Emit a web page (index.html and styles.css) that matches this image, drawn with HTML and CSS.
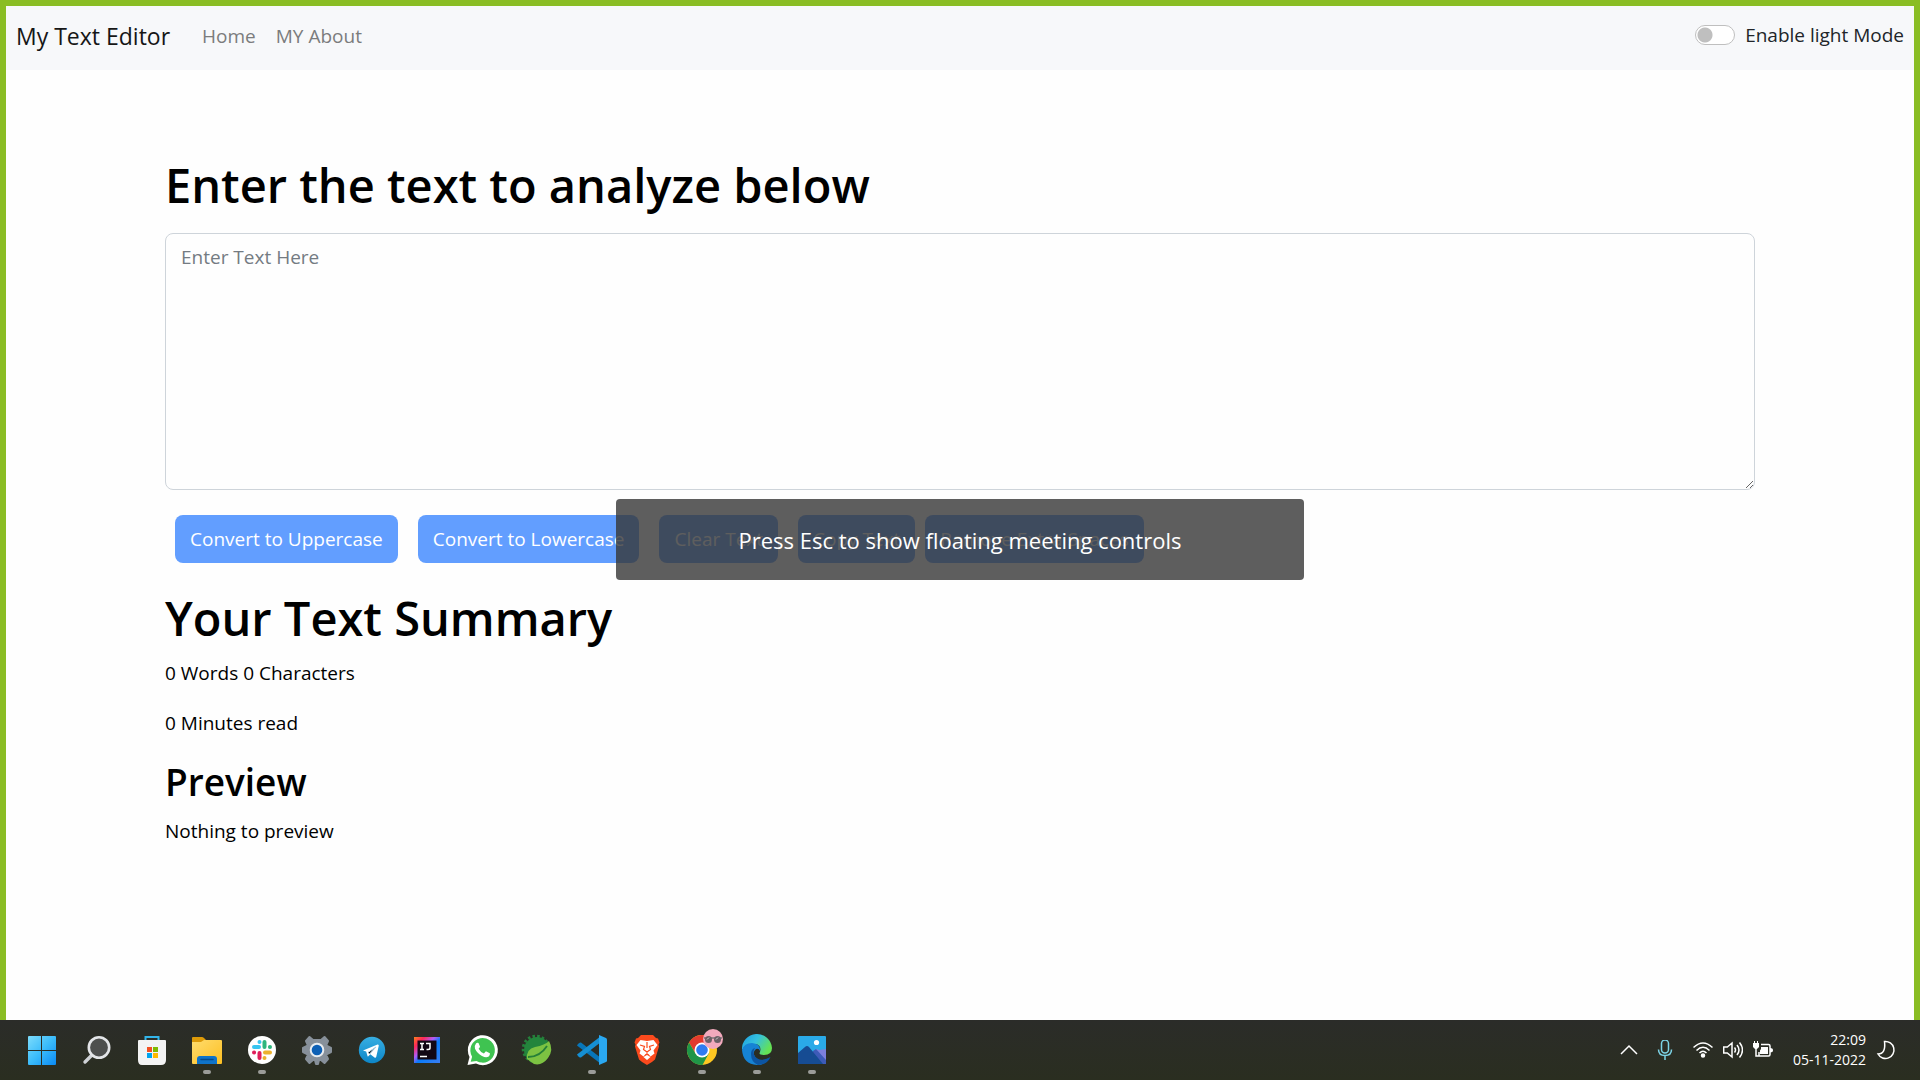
FILE: index.html
```html
<!DOCTYPE html>
<html lang="en">
<head>
<meta charset="utf-8">
<title>My Text Editor</title>
<link rel="stylesheet" href="styles.css">
</head>
<body>
<div class="screen">
  <nav class="navbar">
    <a class="brand" href="#">My Text Editor</a>
    <a class="nav-link" href="#">Home</a>
    <a class="nav-link" href="#">MY About</a>
    <div class="mode">
      <input class="switch" type="checkbox" role="switch" id="mode">
      <label for="mode">Enable light Mode</label>
    </div>
  </nav>

  <main class="container">
    <h1><label for="text">Enter the text to analyze below</label></h1>
    <textarea id="text" rows="8" placeholder="Enter Text Here"></textarea>
    <div class="actions">
      <button class="btn" type="button" disabled>Convert to Uppercase</button>
      <button class="btn" type="button" disabled>Convert to Lowercase</button>
      <button class="btn" type="button" disabled>Clear Text</button>
      <button class="btn btn-joined" type="button" disabled>Copy Text</button>
      <button class="btn" type="button" disabled>Remove Extra Spaces</button>
    </div>
    <h1>Your Text Summary</h1>
    <p>0 Words 0 Characters</p>
    <p>0 Minutes read</p>
    <h2>Preview</h2>
    <p>Nothing to preview</p>
  </main>
  <div class="toast" role="status">Press Esc to show floating meeting controls</div>
</div>

<footer class="taskbar">
  <div class="apps">
    <button class="app" type="button" aria-label="Start">
      <svg viewBox="0 0 30 30"><defs><linearGradient id="win" x1="0" y1="0" x2="1" y2="1" ><stop offset="0" stop-color="#7ddcfb"/><stop offset=".5" stop-color="#3bbcfb"/><stop offset="1" stop-color="#0a8af5"/></linearGradient></defs><path fill="url(#win)" d="M1 2q0-1 1-1h12v14H1zM15 1h13q1 0 1 1v13H15zM1 16h13v14H2q-1 0-1-1zM15 16h14v13q0 1-1 1H15z"/></svg>
    </button>
    <button class="app" type="button" aria-label="Search">
      <svg viewBox="0 0 30 30"><path d="M10 20L3 27" stroke="#cfd2d6" stroke-width="3.4" stroke-linecap="round"/><circle cx="17" cy="12.500" r="10.200" fill="#4d4f4e" stroke="#e3e5e8" stroke-width="2.600"/></svg>
    </button>
    <button class="app" type="button" aria-label="Store">
      <svg viewBox="0 0 30 30"><path d="M8.500 6V2h13v4" fill="none" stroke="#32b5ea" stroke-width="2"/><path fill="#f3f3f3" d="M2 5h26q1 0 1 1v19q0 5-5 5H5q-4 0-4-5V6q0-1 1-1z"/><path fill="#f25022" d="M10 12h5v5h-5z"/><path fill="#7fba00" d="M16 12h5v5h-5z"/><path fill="#00a4ef" d="M10 18h5v5h-5z"/><path fill="#ffb900" d="M16 18h5v5h-5z"/></svg>
    </button>
    <button class="app running" type="button" aria-label="File Explorer">
      <svg viewBox="0 0 30 30"><defs><linearGradient id="fold" x1="0" y1="0" x2="1" y2="1"><stop stop-color="#ffdc6d"/><stop offset="1" stop-color="#fdbf22"/></linearGradient></defs><path fill="#dd9a08" d="M0 3q0-1 1-1h9q1 0 2 1l2 2v5H0z"/><path fill="url(#fold)" d="M0 7h9l3-2h17q1 0 1 1v22q0 1-1 1H1q-1 0-1-1z"/><path fill="#0f73c9" d="M5 29v-5q0-3 3-3h14q3 0 3 3v5z"/><path d="M9 24.500h12" stroke="#064a8b" stroke-width="1.500" stroke-linecap="round"/></svg>
    </button>
    <button class="app running" type="button" aria-label="Slack">
      <svg viewBox="0 0 30 30"><circle cx="15" cy="15" r="14" fill="#fff"/><g stroke-width="4" stroke-linecap="round"><path stroke="#36c5f0" d="M7 12h5M12.500 7v0.100"/><path stroke="#2eb67d" d="M17.500 7v5M23 12h-.1"/><path stroke="#ecb22e" d="M18 17.500h5M17.500 23v-.1"/><path stroke="#e01e5a" d="M12.500 18v5M7 17.500h.1"/></g></svg>
    </button>
    <button class="app" type="button" aria-label="Settings">
      <svg viewBox="0 0 30 30"><path fill="#87909a" stroke="#87909a" stroke-width="2" stroke-linejoin="round" d="M11 5L7.500 2 4 6l2 4.500L1 13v4l5 2.500L4 24l3.500 4 3.500-3h2l1 4h2l1-4h2l3.500 3 3.500-4-2-4.500 5-2.500v-4l-5-2.500L26 6l-3.500-4L19 5z"/><circle cx="15" cy="15" r="6.300" fill="#0d60b5" stroke="#e8ecf0" stroke-width="2"/></svg>
    </button>
    <button class="app" type="button" aria-label="Telegram">
      <svg viewBox="0 0 30 30"><defs><linearGradient id="tg" x1="0" y1="0" x2="0" y2="1"><stop stop-color="#37aee2"/><stop offset="1" stop-color="#0d86c8"/></linearGradient></defs><circle cx="15" cy="15" r="13.200" fill="url(#tg)"/><path fill="#fff" d="M6 15.500L20.500 9.600q1.600-.4 1.200 1.500l-2.500 11q-.5 1.200-1.700.4l-4.200-3.200-2 2q-.5.500-.8-.4l-1.300-4.300z"/><path stroke="#a9cfe6" d="M11 17.500l8-5.500-6.500 7"/></svg>
    </button>
    <button class="app" type="button" aria-label="IntelliJ IDEA">
      <svg viewBox="0 0 30 30"><defs><linearGradient id="ij" x1="0" y1="0" x2="1" y2="1"><stop stop-color="#fc801d"/><stop offset=".2" stop-color="#fe2857"/><stop offset=".4" stop-color="#af5cf8"/><stop offset=".55" stop-color="#087cfa"/><stop offset="1" stop-color="#3b7df0"/></linearGradient></defs><path fill="url(#ij)" d="M2 2h26v26H2z"/><path d="M5.500 5.500h19v19h-19z" fill="#120714"/><path d="M8 8.500h4M10 8.500v6M8 14.500h4M14 8.500h4v4.500q0 1.500-2 1.500h-1.500M8 21.500h7" fill="none" stroke="#fff" stroke-width="1.500"/></svg>
    </button>
    <button class="app" type="button" aria-label="WhatsApp">
      <svg viewBox="0 0 30 30"><path fill="#fff" d="M.5 30l2-8A15 15 0 1 1 9 28.500z"/><path fill="#3fc351" d="M3.700 26.700l1.400-5A12.300 12.300 0 1 1 9.500 26z"/><path fill="#fff" d="M9 8.500q1-1 2.500-.5l1.500 3.500q0 1-1.400 2.200 2 3.600 5.300 4.800l2-2.200 4 2q.3 1.700-1.200 3.200-2.600 1.700-6.700-.5-5-2.700-7-7.200-.8-3.200 1-5.300z"/></svg>
    </button>
    <button class="app" type="button" aria-label="Spring">
      <svg viewBox="0 0 30 30"><circle cx="14" cy="14" r="12.800" fill="none" stroke="#25803b" stroke-width="3" stroke-dasharray="2.500 2.200"/><circle cx="15" cy="15" r="13" fill="#23853c"/><path fill="#7cc242" d="M27 6q5 9-1 17-6 8-14 6l-7-5q-1-10 8-12 10-2 14-6z"/><path d="M6 22q12 0 19-11" fill="none" stroke="#257f38" stroke-width="1.800"/></svg>
    </button>
    <button class="app running" type="button" aria-label="Visual Studio Code">
      <svg viewBox="0 0 30 30"><path fill="#0876b9" d="M1 9q1.500-2 3-1.500L24 23v6L0 10.500z"/><path fill="#158fd3" d="M1 21q1.500 2 3 1.500L24 7V1L0 19.500z"/><path fill="#2aa8f1" d="M22 0l7 3q1 .5 1 1.500v21q0 1-1 1.500l-7 3V0z"/></svg>
    </button>
    <button class="app" type="button" aria-label="Brave">
      <svg viewBox="0 0 30 30"><path fill="#fb4a1d" d="M9 0h12l3 3 2 .5 1.500 4-1 2 .5 2-4 13q-3 3-8 5.500-5-2.500-8-5.500l-4-13 .5-2-1-2L4 3.500 6 3z"/><path fill="#fff" d="M8.500 5L15 6l6.500-1 4 5-4 5.500 1 3-4 3-2-2.500h-3l-2 2.500-4-3 1-3L4.500 10zM11.500 22l3.500-2 3.500 2-3.500 3z"/><path d="M8 10l4.500 1.500-1 3L15 17l3.500-2.500-1-3L22 10M15 7v6M15 17v3" fill="none" stroke="#fb4a1d" stroke-width="1.200"/></svg>
    </button>
    <button class="app running" type="button" aria-label="Chrome">
      <svg viewBox="0 0 30 30"><circle cx="15" cy="15" r="15" fill="#fdc722"/><path fill="#e33b2e" d="M2 7.500A15 15 0 0 1 28 7.500L29 9H15L9 19z"/><path fill="#1f9547" d="M2 7.500A15 15 0 0 0 15.500 30L22 18 8.500 18.500z"/><circle cx="15" cy="15" r="7.500" fill="#fff"/><circle cx="15" cy="15" r="5.800" fill="#2f7bf0"/><circle cx="26" cy="4" r="10" fill="#f2a9bd"/><path d="M17 3h18" stroke="#777" stroke-width="1.500"/><circle cx="21.500" cy="4.500" r="3.500" fill="#6b5f66"/><circle cx="30.500" cy="4.500" r="3.500" fill="#6b5f66"/><path d="M20 4.500l2-2M29 4.500l2-2" stroke="#d8d4d6"/></svg>
    </button>
    <button class="app running" type="button" aria-label="Edge">
      <svg viewBox="0 0 30 30"><defs><linearGradient id="ed" x1="0" y1="0" x2="1" y2=".5"><stop stop-color="#1b9de2"/><stop offset=".5" stop-color="#35c1de"/><stop offset="1" stop-color="#64e254"/></linearGradient></defs><path fill="url(#ed)" d="M0 15A15 15 0 0 1 30 13q0 7-8 7-6 0-4-3 2-7-5-8Q4 8 0 15z"/><path fill="#1683d4" d="M0 15Q2 8 10 8q9 1 8 8-1-3-4-2-4 3-1 8 4 6 14 1.500Q23 30 15 30 1 29 0 15z"/><path fill="#0c55a3" d="M9 19q0-5 4-6-3 4 0 8.500 5 6 15.500.5Q25 30 16 30q-7-3-7-11z"/></svg>
    </button>
    <button class="app running" type="button" aria-label="Photos">
      <svg viewBox="0 0 30 30"><path fill="#2aaae8" d="M2 1h26q1 0 1 1v27H1V2q0-1 1-1z"/><path fill="#7c7fdc" d="M29 14v15H16l2-13q1-3 4-1z"/><path fill="#3d5bb8" d="M16 16l3-2 10 11v4H16z"/><path fill="#164c93" d="M1 18l7-6q2-2 4 0l14 17H1z"/><circle cx="19.500" cy="7.500" r="2.600" fill="#fff"/></svg>
    </button>
  </div>
  <div class="tray">
    <svg class="tray-icon" viewBox="0 0 20 20"><path d="M2 14l8-8 8 8"/></svg>
    <svg class="tray-icon mic" viewBox="0 0 20 20"><rect x="6.500" y="0" width="7" height="13" rx="3.500"/><path d="M3.500 9.500q0 6 6.500 6t6.500-6M10 15.500V20"/></svg>
    <div class="status">
      <svg class="tray-icon" viewBox="0 0 20 20"><path d="M.5 7.500q9.500-9 19 0M3.500 10.500q6.500-6.500 13 0M6.500 13q3.500-3.500 7 0"/><circle cx="10" cy="15.500" r="1.500" fill="#fff"/></svg>
      <svg class="tray-icon" viewBox="0 0 20 20"><path d="M.7 7h3.600L9 3v14l-4.700-4H.7zM11.500 7.500q2 2.500 0 5M14 5q4 5 0 10M16.500 2.500q6 7.500 0 15"/></svg>
      <svg class="tray-icon" viewBox="0 0 20 20"><path d="M8 4.500h7.500q1.500 0 1.500 1.500v8.500q0 1.500-1.500 1.500H6v-4M3 9v7h3"/><path fill="#fff" stroke="none" d="M8 7h7v7H7v-3.500l1-1.500zM17 8q3 0 3 2.200T17 12.500zM0 3h1V1h1v2h2V1h1v2h1v4L4 9H2L0 7z"/></svg>
    </div>
    <div class="clock"><time>22:09</time><time>05-11-2022</time></div>
    <svg class="tray-icon" viewBox="0 0 20 20"><path d="M8.500 1.500A8.500 8.500 0 1 1 2 14q8 0 6.500-12.500z"/></svg>
  </div>
</footer>
</body>
</html>
```
FILE: styles.css
```css
* {
  box-sizing: border-box;
}

body {
  margin: 0;
  min-height: 100vh;
  display: flex;
  flex-direction: column;
  background: #fefefe;
  color: #000;
  font: 19px/30px "Open Sans", "Noto Sans", sans-serif;
}

.screen {
  position: relative;
  flex: 1;
  border: 6px solid #8abd24;
  border-bottom: 0;
}

.navbar {
  display: flex;
  align-items: center;
  gap: 20px;
  min-height: 64px;
  padding: 0 10px 4px;
  background: #f7f8fa;
}

.brand {
  margin-right: 12px;
  color: #161616;
  font-size: 23px;
  text-decoration: none;
}

.nav-link {
  color: #7b7c7d;
  text-decoration: none;
}

.mode {
  display: flex;
  align-items: center;
  gap: 10px;
  margin-left: auto;
  padding-bottom: 3px;
  color: #212529;
}

.switch {
  appearance: none;
  width: 40px;
  height: 20px;
  margin: 0;
  border: 1px solid #bfbfbf;
  border-radius: 10px;
  background: radial-gradient(circle at 9px 9px, #bfbfbf 7px, #fff 8px);
}

.container {
  max-width: 1590px;
  margin: 0 auto;
  padding-top: 85px;
}

h1,
h2 {
  margin: 0 0 10px;
  font-weight: 600;
}

h1 {
  font-size: 47px;
  line-height: 60px;
}

h2 {
  font-size: 37px;
  line-height: 48px;
}

p {
  margin: 0 0 20px;
}

textarea {
  display: block;
  width: 100%;
  margin-top: 18px;
  padding: 8px 15px 7px;
  border: 1px solid #ced4da;
  border-radius: 8px;
  background: #fefefe;
  font: inherit;
  resize: vertical;
}

textarea::placeholder {
  color: #747b82;
  opacity: 1;
}

.actions {
  display: flex;
  gap: 20px;
  padding: 25px 10px;
}

.btn {
  height: 48px;
  padding: 0 15px;
  border: 0;
  border-radius: 8px;
  background: #629eff;
  color: #fff;
  font: inherit;
  white-space: nowrap;
}

.btn-joined {
  margin-right: -10px;
}

.toast {
  position: absolute;
  top: 493px;
  left: 50%;
  width: 688px;
  transform: translateX(-50%);
  padding: 26px 0 25px;
  border-radius: 4px;
  background: rgba(54, 54, 54, 0.8);
  color: #fff;
  font-size: 22px;
  text-align: center;
}

.taskbar {
  display: flex;
  justify-content: space-between;
  height: 60px;
  padding: 0 24px 0 14px;
  background: linear-gradient(#2b2c29, #2a2e20);
  color: #fff;
}

.apps,
.tray,
.status {
  display: flex;
  align-items: center;
}

.app {
  display: grid;
  place-items: center;
  position: relative;
  width: 55px;
  height: 60px;
  padding: 0;
  border: 0;
  background: none;
}

.app svg {
  width: 30px;
  height: 30px;
  overflow: visible;
}

.running::after {
  content: "";
  position: absolute;
  bottom: 6px;
  left: 50%;
  width: 8px;
  height: 4px;
  margin-left: -4px;
  border-radius: 2px;
  background: #9b9c99;
}

.tray {
  gap: 16px;
}

.status {
  gap: 10px;
  margin: 0 4px 0 2px;
}

.tray-icon {
  width: 20px;
  height: 20px;
  fill: none;
  stroke: #fff;
  stroke-width: 1.5;
}

.mic {
  stroke: #7cd3e5;
}

.clock {
  display: flex;
  flex-direction: column;
  align-items: flex-end;
  margin-right: -6px;
  font-size: 14px;
  line-height: 20px;
}
```
